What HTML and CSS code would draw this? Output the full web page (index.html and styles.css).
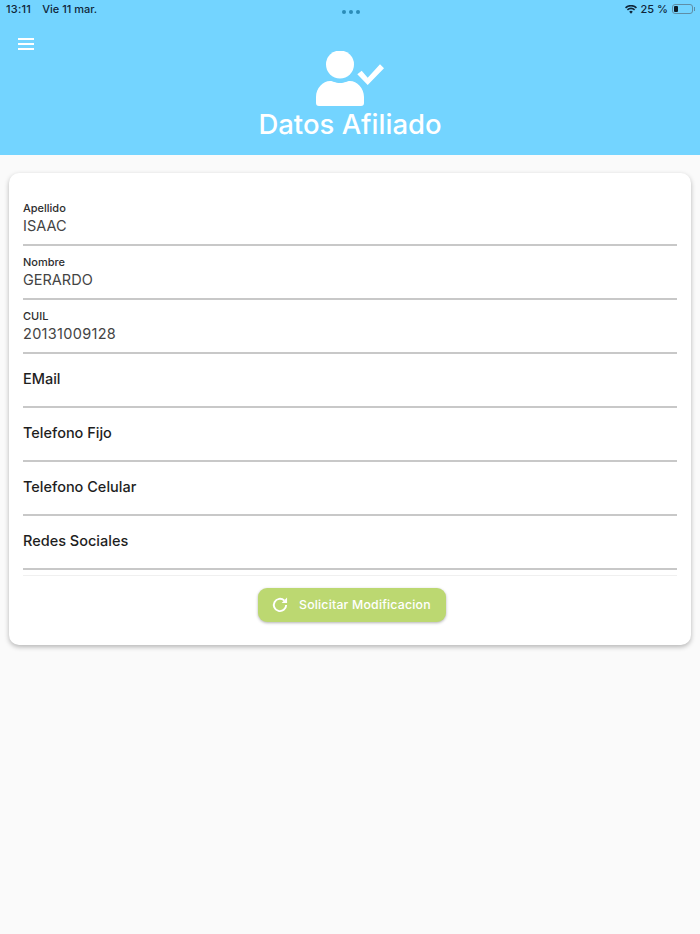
FILE: index.html
```html
<!DOCTYPE html>
<html lang="es">
<head>
<meta charset="utf-8">
<title>Datos Afiliado</title>
<link rel="stylesheet" href="styles.css">
</head>
<body>
<header class="header">
  <div class="status">
    <div class="status-left"><span>13:11</span><span>Vie 11 mar.</span></div>
    <div class="dots"><i></i><i></i><i></i></div>
    <div class="status-right">
      <svg class="wifi" viewBox="0 0 16 12" width="12" height="9"><path d="M8 11.500 5.600 8.900a3.400 3.400 0 0 1 4.800 0zM3.900 7.200 2.500 5.700a7.800 7.800 0 0 1 11 0l-1.400 1.500a5.800 5.800 0 0 0-8.200 0zM1.400 4.600 0 3.100a11.300 11.300 0 0 1 16 0l-1.400 1.500a9.300 9.300 0 0 0-13.200 0z" fill="#10263a"/></svg>
      <span>25 %</span>
      <span class="battery"><span class="battery-fill"></span></span>
    </div>
  </div>
  <div class="toolbar">
    <button class="menu" aria-label="Menú"><i></i><i></i><i></i></button>
  </div>
  <div class="hero">
    <svg class="hero-icon" viewBox="0 0 70 56" width="70" height="56"><circle cx="25" cy="13.500" r="14" fill="#fff"/><path d="M4 55a3 3 0 0 1-3-3v-6c0-9 7-16 14-16 3 0 5 2 10 2s7-2 10-2c7 0 14 7 14 16v6a3 3 0 0 1-3 3z" fill="#fff"/><path d="M42.300 23.300 46.700 19.700 52.700 26.700 65 13.300 69 17.300 52.700 34z" fill="#fff"/></svg>
    <h1 class="title">Datos Afiliado</h1>
  </div>
</header>
<main class="card">
  <div class="field"><span class="label">Apellido</span><span class="value">ISAAC</span></div>
  <div class="field"><span class="label">Nombre</span><span class="value">GERARDO</span></div>
  <div class="field"><span class="label">CUIL</span><span class="value numeric">20131009128</span></div>
  <div class="field empty"><span class="placeholder">EMail</span></div>
  <div class="field empty"><span class="placeholder">Telefono Fijo</span></div>
  <div class="field empty"><span class="placeholder">Telefono Celular</span></div>
  <div class="field empty"><span class="placeholder">Redes Sociales</span></div>
  <div class="actions">
    <button class="action">
      <svg viewBox="0 0 24 24" width="20" height="20"><path d="M19.400 12a7.400 7.400 0 1 1-2.300-5.400" fill="none" stroke="#fff" stroke-width="2.300"/><path d="M20.500 3v6.500H14z" fill="#fff"/></svg>
      <span class="action-text">Solicitar Modificacion</span>
    </button>
  </div>
</main>
</body>
</html>
```

FILE: styles.css
```css
* { box-sizing: border-box; }
html, body { margin: 0; padding: 0; }
body {
  width: 700px;
  height: 934px;
  overflow: hidden;
  background: #fafafa;
  font-family: Inter, "Liberation Sans", sans-serif;
}
.header {
  height: 155px;
  background: #73d4ff;
  display: flex;
  flex-direction: column;
}
.status {
  height: 18px;
  margin-bottom: 1px;
  padding: 0 5px 0 6px;
  display: grid;
  grid-template-columns: 1fr auto 1fr;
  align-items: center;
  font-size: 11px;
  font-weight: 500;
  color: #10263a;
}
.status-left { display: flex; gap: 11px; }
.status-left span:first-child { letter-spacing: .25px; }
.status-right { display: flex; justify-content: flex-end; align-items: center; gap: 4px; }
.dots { display: flex; gap: 3px; padding-top: 5px; }
.dots i { width: 4px; height: 4px; border-radius: 50%; background: #2b8cb8; }
.battery {
  position: relative;
  width: 21px;
  height: 10px;
  margin-right: 2px;
  border: 1px solid #5f8ea6;
  border-radius: 3px;
  padding: 1px;
  display: flex;
}
.battery::after {
  content: "";
  position: absolute;
  right: -3px;
  top: 2px;
  width: 1px;
  height: 4px;
  background: #5f8ea6;
}
.battery-fill { width: 4px; background: #0c1c28; border-radius: 1px; }
.toolbar { height: 32px; padding: 19px 0 0 18px; }
.menu {
  width: 16px;
  height: 12px;
  padding: 0;
  border: 0;
  background: none;
  display: flex;
  flex-direction: column;
  justify-content: space-between;
}
.menu i { display: block; width: 16px; height: 2px; background: #fff; }
.hero {
  display: flex;
  flex-direction: column;
  align-items: center;
}
.hero-icon { display: block; }
.title {
  margin: 0;
  font-size: 27.500px;
  line-height: 34px;
  font-weight: 500;
  color: #fff;
}
.card {
  width: 682px;
  height: 472px;
  margin: 18px 0 0 9px;
  padding: 19px 14px 0;
  background: #fff;
  border-radius: 10px;
  box-shadow: 0 2px 5px rgba(0,0,0,.28);
}
.field {
  height: 54px;
  border-bottom: 2px solid #c8c8c8;
  display: flex;
  flex-direction: column;
  justify-content: flex-end;
  padding-bottom: 8px;
}
.label { font-size: 11px; line-height: 14px; margin-bottom: 1px; font-weight: 500; color: #2e2e2e; }
.value { font-size: 14.500px; line-height: 20px; color: #444; }
.numeric { letter-spacing: .3px; }
.empty { padding-bottom: 17px; }
.placeholder { font-size: 14.500px; line-height: 20px; font-weight: 500; color: #1e1e1e; }
.actions {
  margin-top: 5px;
  border-top: 1px solid #f0f0f0;
  padding-top: 12px;
  display: flex;
  justify-content: center;
}
.action {
  width: 188px;
  height: 34px;
  margin-left: 4px;
  border: 0;
  border-radius: 9px;
  background: #bcd871;
  box-shadow: 0 1px 3px rgba(0,0,0,.3);
  color: #fff;
  font-family: inherit;
  font-size: 12.300px;
  letter-spacing: .2px;
  font-weight: 500;
  display: flex;
  align-items: center;
  gap: 9px;
  padding: 0 0 0 12px;
}
.action-text { padding-bottom: 2px; }
```
